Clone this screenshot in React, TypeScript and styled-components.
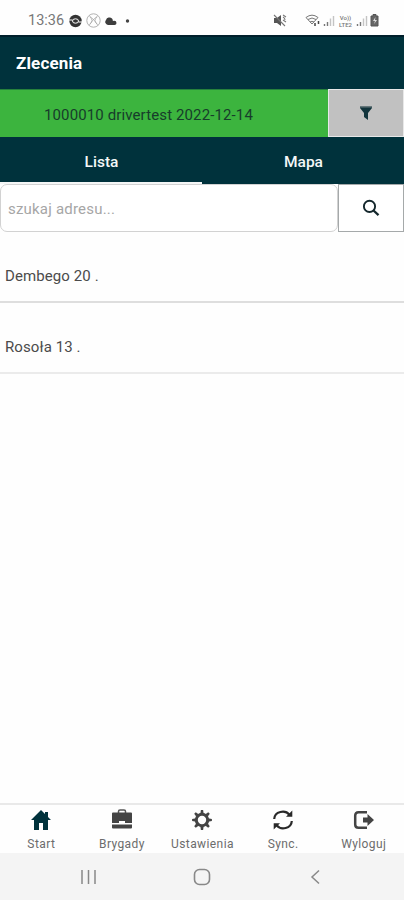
import React from "react";
import styled, { createGlobalStyle } from "styled-components";

const Global = createGlobalStyle`
  * { box-sizing: border-box; }
  body { margin: 0; background: #fff; font-family: Roboto, "Liberation Sans", sans-serif; }
  svg { display: block; flex: none; }
`;

const Screen = styled.div`
  width: 404px;
  height: 900px;
  display: flex;
  flex-direction: column;
  background: #fefefe;
  overflow: hidden;
`;

const StatusBar = styled.div`
  height: 35px;
  flex: none;
  display: flex;
  align-items: center;
  padding: 6px 25px 0 28px;
`;

const Clock = styled.span`
  width: 41px;
  font-size: 14.5px;
  line-height: 18px;
  color: #777;
`;

const StatusGroup = styled.div<{ $end?: boolean }>`
  display: flex;
  align-items: center;
  gap: ${(p) => (p.$end ? 2 : 4)}px;
  margin-left: ${(p) => (p.$end ? "auto" : "0")};
`;

const MuteSlot = styled.div`
  margin-right: 16px;
`;

const Network = styled.div`
  width: 17px;
  display: flex;
  flex-direction: column;
  align-items: center;
  font-size: 6px;
  line-height: 7px;
  font-weight: 500;
  color: #777;
  white-space: nowrap;
`;

const Header = styled.header`
  height: 54px;
  flex: none;
  display: flex;
  align-items: center;
  padding: 0 16px;
  background: #00323c;
  border-top: 2px solid #001f2b;
`;

const Title = styled.h1`
  margin: 0;
  font-size: 17px;
  line-height: 22px;
  font-weight: 700;
  letter-spacing: 0.15px;
  color: #fff;
`;

const RouteBar = styled.div`
  height: 48px;
  flex: none;
  display: flex;
`;

const RouteName = styled.div`
  width: 328px;
  display: flex;
  align-items: center;
  padding: 3px 0 0 44px;
  background: #3cb43e;
  border-top: 1px solid #26813c;
  font-size: 15px;
  letter-spacing: 0.12px;
  color: #173c2b;
  white-space: nowrap;
`;

const FilterButton = styled.button`
  flex: 1;
  display: grid;
  place-items: center;
  padding: 0;
  background: #c1c1c1;
  border: 1px solid #e8e8e8;
`;

const Tabs = styled.nav`
  height: 47px;
  flex: none;
  display: flex;
  background: #00323c;
`;

const Tab = styled.button<{ $active?: boolean }>`
  flex: 1;
  padding: 5px 0 0 1px;
  border: 0;
  border-bottom: 2px solid ${(p) => (p.$active ? "#f4f6f6" : "#00323c")};
  background: transparent;
  font: 500 15.5px/20px Roboto, sans-serif;
  color: #f5f8f8;
`;

const SearchRow = styled.div`
  height: 48px;
  flex: none;
  display: flex;
`;

const SearchInput = styled.input`
  width: 338px;
  height: 48px;
  padding: 2px 8px 0 7px;
  border: 1px solid #d2d2d2;
  border-radius: 7px;
  outline: 0;
  background: #fff;
  font: 15px Roboto, sans-serif;
  letter-spacing: 0.2px;
  color: #333;
  &::placeholder { color: #a6a6a6; }
`;

const SearchButton = styled.button`
  flex: 1;
  display: grid;
  place-items: center;
  padding: 0;
  background: #fff;
  border: 1px solid #a5a9aa;
`;

const List = styled.main`
  flex: 1;
`;

const Row = styled.div<{ $first?: boolean }>`
  height: 71px;
  display: flex;
  align-items: flex-end;
  padding: 0 5px 16px;
  border-bottom: 2px solid ${(p) => (p.$first ? "#dedede" : "#ebebeb")};
  font-size: 15px;
  line-height: 18px;
  letter-spacing: 0.1px;
  color: #4b4b4b;
`;

const BottomTabs = styled.nav`
  height: 50px;
  flex: none;
  display: grid;
  grid-template-columns: repeat(5, 1fr);
  padding: 0 0 0 1px;
  border-top: 2px solid #e9e9e9;
`;

const BottomTab = styled.div`
  display: flex;
  flex-direction: column;
  align-items: center;
  gap: 6px;
  padding-top: 4px;
  font-size: 12px;
  line-height: 14px;
  letter-spacing: 0.4px;
  color: #6c6c6c;
`;

const SystemNav = styled.div`
  height: 47px;
  flex: none;
  display: grid;
  grid-template-columns: 113px 1fr 113px;
  justify-items: center;
  align-items: center;
  padding: 0 32px;
  background: #f4f4f4;
`;

const Signal = () => (
  <svg width="12" height="12" viewBox="0 0 12 12" fill="none" strokeWidth="1.4">
    <path d="M1.5 11V9M4.5 11V7" stroke="#777" />
    <path d="M7.5 11V3.5M10.5 11V1" stroke="#c4c4c4" />
  </svg>
);

const HomeIcon = () => (
  <svg width="22" height="22" viewBox="0 0 22 22">
    <path d="M11 1 1 11h3v10h5v-7h4v7h5V11h3l-3-3V3h-3v2z" fill="#00323c" />
  </svg>
);

const BriefcaseIcon = () => (
  <svg width="22" height="22" viewBox="0 0 22 22">
    <path d="M7.500 5V2.500Q7.500 1 9 1h4q1.500 0 1.500 1.500V5" fill="none" stroke="#555" strokeWidth="1.500" />
    <path d="M2 3.500h18q1 0 1 1V14h-7v-2H8v2H1V4.500q0-1 1-1zM1 15.500h20v3q0 1-1 1H2q-1 0-1-1z" fill="#444" />
  </svg>
);

const teeth = [0, 45, 90, 135, 180, 225, 270, 315];
const GearIcon = () => (
  <svg width="22" height="22" viewBox="0 0 22 22">
    <circle cx="11" cy="11" r="5.700" fill="none" stroke="#444" strokeWidth="3" />
    {teeth.map((a) => (
      <path key={a} d="m9.300 5 .6-3.900h2.200l.6 3.900z" fill="#444" transform={`rotate(${a} 11 11)`} />
    ))}
  </svg>
);

const SyncIcon = () => (
  <svg width="22" height="22" viewBox="0 0 22 22">
    <path d="M2.200 10C2.700 2.300 13 .4 17.500 5.700M19.800 12C19.300 19.700 9 21.600 4.500 16.300" fill="none" stroke="#292929" strokeWidth="2.200" />
    <path d="M20.300 1.500v6.300h-6.300zM1.700 20.500v-6.300h6.300z" fill="#292929" />
  </svg>
);

const LogoutIcon = () => (
  <svg width="22" height="22" viewBox="0 0 22 22">
    <path d="M14 3.200H5.500Q2.200 3.200 2.200 6.500v9q0 3.300 3.300 3.300H14" fill="none" stroke="#444" strokeWidth="2.500" />
    <path d="M10 8.500h4.500V5l6.500 6-6.500 6v-3.500H10z" fill="#444" />
  </svg>
);

const destinations = [
  { label: "Start", Icon: HomeIcon },
  { label: "Brygady", Icon: BriefcaseIcon },
  { label: "Ustawienia", Icon: GearIcon },
  { label: "Sync.", Icon: SyncIcon },
  { label: "Wyloguj", Icon: LogoutIcon },
];

export default function App() {
  return (
    <>
      <Global />
      <Screen>
        <StatusBar>
          <Clock>13:36</Clock>
          <StatusGroup>
            <svg width="13" height="14" viewBox="0 0 13 14">
              <circle cx="6.500" cy="7" r="6.200" fill="#333" />
              <path d="M0 6h3.500M9.500 8H13" stroke="#fff" strokeWidth="1" />
              <ellipse cx="6.500" cy="7" rx="3" ry="2.200" fill="none" stroke="#fff" strokeWidth="1" />
            </svg>
            <svg width="15" height="15" viewBox="0 0 15 15" fill="none" stroke="#aaa" strokeWidth=".9">
              <circle cx="7.500" cy="7.500" r="6.700" />
              <path d="M3 2.500Q9 7 12 12.500M12 2.500Q6 7 3 12.500M4 4Q8 7.500 4 11M11 4Q7 7.500 11 11" strokeWidth=".8" />
            </svg>
            <svg width="12" height="12" viewBox="0 0 12 12">
              <path d="M3 10a3 3 0 0 1-2-5 3.600 3.600 0 0 1 6-1.500q1 1 .8 2.500 3.700-.8 3.700 2 0 2-2 2z" fill="#3d3d3d" />
            </svg>
            <svg width="14" height="12" viewBox="0 0 14 12"><circle cx="6.500" cy="6" r="1.700" fill="#444" /></svg>
          </StatusGroup>
          <StatusGroup $end>
            <MuteSlot>
              <svg width="14" height="13" viewBox="0 0 14 13">
                <path d="M1 4h3l4-3v11L4 9H1z" fill="#555" />
                <path d="m1 1 11 11M10 3q2 1 2 3M10 6l3 2M10 1l3 2" fill="none" stroke="#777" strokeWidth="1.100" />
              </svg>
            </MuteSlot>
            <svg width="16" height="13" viewBox="0 0 16 13" fill="none" stroke="#777">
              <path d="M1 3.500Q7 -1.200 13 3.500L7 10zM3 5.500q4-3 8 0M5 8q2-1.500 4 0" />
              <path d="M10 9v3M13.500 7v3" stroke="#444" strokeWidth="1.500" />
            </svg>
            <Signal />
            <Network><span>Vo))</span><span>LTE2</span></Network>
            <Signal />
            <svg width="9" height="13" viewBox="0 0 9 13">
              <path d="M3 .5h3V2h2v10H1V2h2z" fill="#666" stroke="#555" />
              <path d="M5.500 3 3 7h2l-1 3 3-4H5z" fill="#ddd" />
            </svg>
          </StatusGroup>
        </StatusBar>
        <Header><Title>Zlecenia</Title></Header>
        <RouteBar>
          <RouteName>1000010 drivertest 2022-12-14</RouteName>
          <FilterButton aria-label="Filtr">
            <svg width="14" height="18" viewBox="0 0 14 18">
              <path d="M1 2h12v2L9 9v7l-4-3V9L1 4z" fill="#12343c" />
              <path d="M1 2h12v1.500H1z" fill="#66777b" />
            </svg>
          </FilterButton>
        </RouteBar>
        <Tabs>
          <Tab $active>Lista</Tab>
          <Tab>Mapa</Tab>
        </Tabs>
        <SearchRow>
          <SearchInput placeholder="szukaj adresu..." />
          <SearchButton aria-label="Szukaj">
            <svg width="18" height="18" viewBox="0 0 18 18" fill="none" stroke="#14272c">
              <circle cx="7.500" cy="7.400" r="5.600" strokeWidth="1.900" />
              <path d="m11.500 11.500 5 4.700" strokeWidth="2.300" />
            </svg>
          </SearchButton>
        </SearchRow>
        <List>
          <Row $first>Dembego 20 .</Row>
          <Row>Rosoła 13 .</Row>
        </List>
        <BottomTabs>
          {destinations.map(({ label, Icon }) => (
            <BottomTab key={label}><Icon />{label}</BottomTab>
          ))}
        </BottomTabs>
        <SystemNav>
          <svg width="17" height="16" viewBox="0 0 17 16"><path d="M2 1v14M8.500 1v14M15 1v14" stroke="#888" strokeWidth="1.500" /></svg>
          <svg width="18" height="18" viewBox="0 0 18 18"><rect x="1.500" y="1.500" width="15" height="15" rx="5" fill="none" stroke="#888" strokeWidth="1.600" /></svg>
          <svg width="11" height="16" viewBox="0 0 11 16"><path d="M9 1.500 2 8l7 6.500" fill="none" stroke="#888" strokeWidth="1.500" /></svg>
        </SystemNav>
      </Screen>
    </>
  );
}
